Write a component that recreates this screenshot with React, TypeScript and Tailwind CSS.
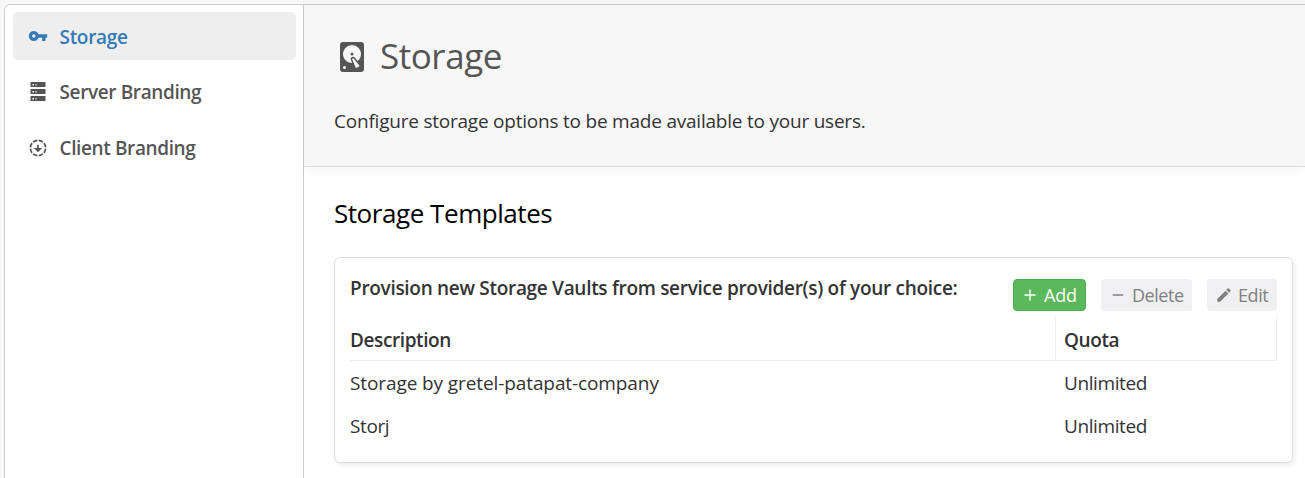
import React from 'react';

type IconProps = { className?: string };

const KeyIcon = ({ className }: IconProps) => (
  <svg viewBox="0 0 24 24" fill="currentColor" className={className}>
    <path d="M12.65 10C11.83 7.67 9.61 6 7 6c-3.31 0-6 2.69-6 6s2.69 6 6 6c2.61 0 4.83-1.67 5.65-4H17v4h4v-4h2v-4H12.65zM7 14c-1.1 0-2-.9-2-2s.9-2 2-2 2 .9 2 2-.9 2-2 2z" />
  </svg>
);

const ServerIcon = ({ className }: IconProps) => (
  <svg viewBox="0 0 20 20" fill="currentColor" className={className}>
    <path
      fillRule="evenodd"
      d="M2.5 0h15v5h-15zM2.5 7h15v5h-15zM2.5 14h15v5h-15zM4.5 2v1.5H6V2zM7.5 2v1.5h1V2zM4.5 9v1.5H6V9zM7.5 9v1.5h1V9zM4.5 16v1.5H6V16zM7.5 16v1.5h1V16z"
    />
  </svg>
);

const DownloadIcon = ({ className }: IconProps) => (
  <svg viewBox="0 0 24 24" className={className}>
    <circle cx="12" cy="12" r="9.2" fill="none" stroke="currentColor" strokeWidth="2" pathLength="80" strokeDasharray="7.6 2.4" strokeDashoffset="-1.2" />
    <path fill="currentColor" d="M12 17 7 12h4V8h2v4h4z" />
  </svg>
);

const DiskIcon = ({ className }: IconProps) => (
  <svg viewBox="0 0 24 24" fill="currentColor" className={className}>
    <path d="M6,2H18A2,2 0 0,1 20,4V20A2,2 0 0,1 18,22H6A2,2 0 0,1 4,20V4A2,2 0 0,1 6,2M12,4A6,6 0 0,0 6,10C6,13.31 8.69,16 12.1,16L11.22,13.77C10.95,13.29 11.11,12.68 11.59,12.4L12.45,11.9C12.93,11.63 13.54,11.79 13.82,12.27L15.74,14.69C17.12,13.59 18,11.9 18,10A6,6 0 0,0 12,4M12,9A1,1 0 0,1 13,10A1,1 0 0,1 12,11A1,1 0 0,1 11,10A1,1 0 0,1 12,9M7,18A1,1 0 0,0 6,19A1,1 0 0,0 7,20A1,1 0 0,0 8,19A1,1 0 0,0 7,18M12.09,13.27L14.58,19.58L17.17,18.08L12.95,12.77L12.09,13.27Z" />
  </svg>
);

const PencilIcon = ({ className }: IconProps) => (
  <svg viewBox="0 0 24 24" fill="currentColor" className={className}>
    <path d="M20.71 7.04c.39-.39.39-1.04 0-1.41l-2.34-2.34c-.37-.39-1.02-.39-1.41 0l-1.84 1.83 3.75 3.75M3 17.25V21h3.75L17.81 9.93l-3.75-3.75z" />
  </svg>
);

const PlusIcon = ({ className }: IconProps) => (
  <svg viewBox="0 0 24 24" fill="currentColor" className={className}>
    <path d="M19.5 12.9h-6.6v6.6h-1.8v-6.6H4.5v-1.8h6.6V4.5h1.8v6.6h6.6z" />
  </svg>
);

const MinusIcon = ({ className }: IconProps) => (
  <svg viewBox="0 0 24 24" fill="currentColor" className={className}>
    <path d="M19 13H5v-2h14z" />
  </svg>
);

export default function App() {
  return (
    <div className="h-[478px] overflow-hidden bg-[#f7f7f7] pt-1 pl-1 font-['Open_Sans',sans-serif] text-[19px] text-[#333]">
      <div className="flex h-[500px] w-[1320px] rounded-tl-md border border-[#ccc] bg-white">
        <nav className="flex w-[299px] shrink-0 flex-col gap-2 border-r border-[#ccc] px-2 pt-[7px] pr-[7px] font-semibold text-[#555]">
          <a className="flex h-12 items-center rounded-[5px] bg-[#eee] pl-[15px] text-[#337ab7]">
            <KeyIcon className="mr-[11.5px] size-5" />
            <span className="pt-[2px] tracking-[-0.3px]">Storage</span>
          </a>
          <a className="flex h-12 items-center pl-[15px]">
            <ServerIcon className="mr-[11.5px] size-5" />
            <span className="tracking-[-0.38px]">Server Branding</span>
          </a>
          <a className="flex h-12 items-center pl-[15px]">
            <DownloadIcon className="mr-[11.5px] size-5" />
            <span className="tracking-[-0.38px]">Client Branding</span>
          </a>
        </nav>
        <main className="w-[1001px]">
          <header className="h-[162px] border-b border-[#ddd] bg-[#f7f7f7] pt-[27px] pl-[30px] shadow-[0_2px_10px_rgba(0,0,0,0.06)]">
            <h1 className="flex h-[50px] items-center text-[35px] text-[#555]">
              <DiskIcon className="mr-[10px] size-9" />
              <span className="pb-[2px] tracking-[-0.45px]">Storage</span>
            </h1>
            <p className="mt-[25px] leading-7 tracking-[-0.22px]">Configure storage options to be made available to your users.</p>
          </header>
          <section className="px-[30px] pt-[26px] pr-[12px]">
            <h2 className="text-[26px] leading-10 tracking-[-0.45px] text-black">Storage Templates</h2>
            <div className="mt-[24px] h-[206px] rounded-md border border-[#ddd] px-[15px] pt-[16px] shadow-[2px_3px_5px_rgba(0,0,0,0.07)]">
              <div className="flex h-[43px] justify-between">
                <h3 className="leading-7 font-semibold tracking-[-0.3px]">Provision new Storage Vaults from service provider(s) of your choice:</h3>
                <div className="flex gap-[15px] pt-[5px] text-[18px]">
                  <button className="flex h-8 w-[73px] items-center rounded border border-[#4cae4c] bg-[#5cb85c] pl-[7px] text-white">
                    <PlusIcon className="mr-[5px] size-[18px] shrink-0" />
                    <span className="tracking-[-0.15px]">Add</span>
                  </button>
                  <button className="flex h-8 w-[91px] items-center rounded bg-[#f0f0f2] pl-2 text-[#808080]">
                    <MinusIcon className="mr-[5px] size-[18px] shrink-0" />
                    <span className="tracking-[-0.45px]">Delete</span>
                  </button>
                  <button className="flex h-8 w-[70px] items-center rounded bg-[#f0f0f2] pl-2 text-[#808080]">
                    <PencilIcon className="mr-[5px] size-[18px] shrink-0" />
                    <span className="tracking-[-0.4px]">Edit</span>
                  </button>
                </div>
              </div>
              <div className="grid grid-cols-[706px_221px] tracking-[-0.4px]">
                <div className="flex h-11 items-center border-r border-b border-[#eee] pt-[4px] font-semibold">Description</div>
                <div className="flex h-11 items-center border-r border-b border-[#eee] pt-[4px] pl-2 font-semibold">Quota</div>
                <div className="flex h-[43px] items-center pt-[2px] tracking-[-0.1px]">Storage by gretel-patapat-company</div>
                <div className="flex h-[43px] items-center pt-[2px] pl-2">Unlimited</div>
                <div className="flex h-[43px] items-center pt-[2px]">Storj</div>
                <div className="flex h-[43px] items-center pt-[2px] pl-2">Unlimited</div>
              </div>
            </div>
          </section>
        </main>
      </div>
    </div>
  );
}
